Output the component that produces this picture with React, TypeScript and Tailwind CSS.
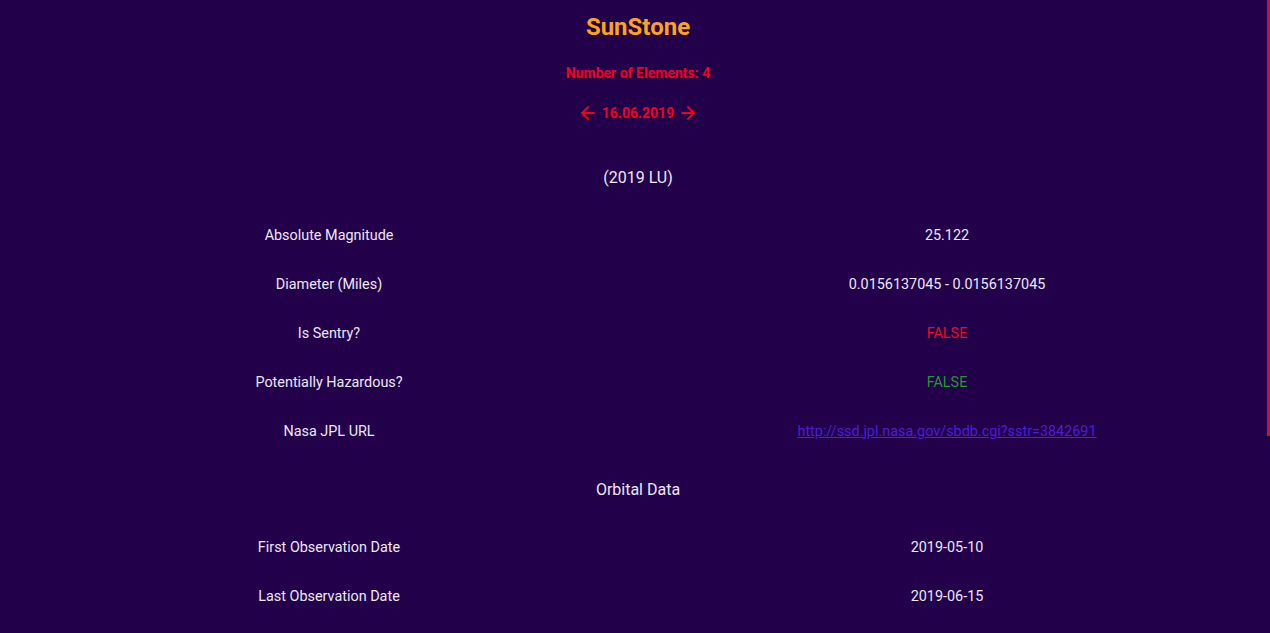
import { ArrowLeft, ArrowRight } from "lucide-react";

interface Row {
  label: string;
  value: string;
  tone?: "red" | "green" | "link";
}

const mainRows: Row[] = [
  { label: "Absolute Magnitude", value: "25.122" },
  { label: "Diameter (Miles)", value: "0.0156137045 - 0.0156137045" },
  { label: "Is Sentry?", value: "FALSE", tone: "red" },
  { label: "Potentially Hazardous?", value: "FALSE", tone: "green" },
  {
    label: "Nasa JPL URL",
    value: "http://ssd.jpl.nasa.gov/sbdb.cgi?sstr=3842691",
    tone: "link",
  },
];

const orbitalRows: Row[] = [
  { label: "First Observation Date", value: "2019-05-10" },
  { label: "Last Observation Date", value: "2019-06-15" },
];

function DataRow({ row }: { row: Row }) {
  let valueClass = "text-[#ece8f4]";
  if (row.tone === "red") valueClass = "text-[#e8101e]";
  if (row.tone === "green") valueClass = "text-[#1f9a2c]";
  if (row.tone === "link") valueClass = "text-[#4a1fd6] underline";
  return (
    <div className="grid grid-cols-2 h-[49px] items-center text-[14.4px] text-center">
      <div className="text-[#ece8f4]">{row.label}</div>
      <div className={valueClass}>
        {row.tone === "link" ? <a href="#">{row.value}</a> : row.value}
      </div>
    </div>
  );
}

export default function App() {
  return (
    <div
      className="flex h-[633px] overflow-hidden bg-[#22004a]"
      style={{ fontFamily: "Roboto, 'Open Sans', sans-serif" }}>
      <main className="flex-1 pl-5 pr-[11px] pt-[11px]">
        <h1 className="text-center text-2xl leading-8 font-bold text-[#fba41d]">
          SunStone
        </h1>
        <p className="mt-5 text-center text-sm leading-5 font-bold text-[#f2001c]">
          Number of Elements: 4
        </p>
        <div className="mt-5 flex h-5 items-center justify-center gap-1 text-sm font-bold text-[#f2001c]">
          <ArrowLeft size={20} strokeWidth={2.4} />
          <span>16.06.2019</span>
          <ArrowRight size={20} strokeWidth={2.4} />
        </div>

        <h2 className="mt-[43px] text-center text-base leading-6 text-[#ece8f4]">
          (2019 LU)
        </h2>
        <div className="mt-[21px]">
          {mainRows.map((r) => (
            <DataRow key={r.label} row={r} />
          ))}
        </div>

        <h2 className="mt-[22px] text-center text-base leading-6 text-[#ece8f4]">
          Orbital Data
        </h2>
        <div className="mt-[21px]">
          {orbitalRows.map((r) => (
            <DataRow key={r.label} row={r} />
          ))}
        </div>
      </main>
      <div className="w-[3px]">
        <div className="h-[436px] bg-[#d0102a]" />
      </div>
    </div>
  );
}
